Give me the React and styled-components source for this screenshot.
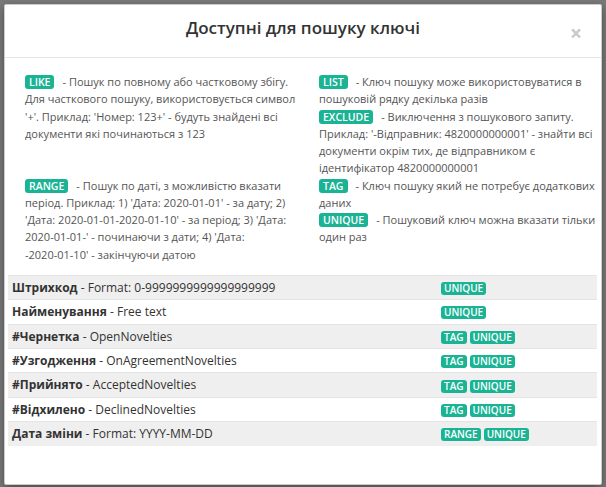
import React from "react";
import styled, { createGlobalStyle } from "styled-components";

/* ================= global ================= */
const GlobalStyle = createGlobalStyle`
  html, body {
    margin: 0;
    padding: 0;
    background: #7a7a7a;
  }
  body {
    font-family: "Open Sans", "Noto Sans", sans-serif;
    color: #333333;
  }
`;

/* ================= styled-components ================= */
const Backdrop = styled.div`
  width: 606px;
  height: 487px;
  box-sizing: border-box;
  padding: 4px 4px 2px 4px;
  background: #7a7a7a;
  overflow: hidden;
`;

const Modal = styled.div`
  height: 481px;
  box-sizing: border-box;
  background: #ffffff;
  border: 1px solid rgba(0, 0, 0, 0.2);
  border-radius: 2px;
  box-shadow: 0 3px 9px rgba(0, 0, 0, 0.4);
  display: flex;
  flex-direction: column;
`;

const Header = styled.div`
  position: relative;
  padding: 11px 15px 17px;
  border-bottom: 1px solid #e5e5e5;
  text-align: center;
`;

const Title = styled.h4`
  margin: 0;
  font-size: 17px;
  line-height: 24px;
  font-weight: 600;
  color: #333333;
`;

const Close = styled.button`
  position: absolute;
  right: 19px;
  top: 18px;
  border: 0;
  background: none;
  padding: 0;
  font-family: "Open Sans", sans-serif;
  font-size: 21px;
  line-height: 21px;
  font-weight: 700;
  color: #c9c9c9;
  cursor: pointer;
`;

const Body = styled.div`
  padding: 15px 4px 0 3px;
`;

const Legend = styled.div`
  display: grid;
  grid-template-columns: 275px 290px;
  column-gap: 19px;
  padding-left: 17px;
  margin-bottom: 12px;
  font-size: 11px;
  line-height: 17.25px;
  color: #555555;
`;

const LegendCol = styled.div``;

const LegendItem = styled.div`
  .dash {
    margin-left: 8px;
  }
  .nw {
    white-space: nowrap;
  }
`;

const Badge = styled.span`
  display: inline-block;
  background: #1ab394;
  color: #ffffff;
  font-weight: 600;
  border-radius: 3px;
  font-size: ${(p) => (p.$small ? "10px" : "10.5px")};
  line-height: ${(p) => (p.$small ? "13px" : "14px")};
  padding: ${(p) => (p.$small ? "0 3px" : "0 4px")};
  margin-right: ${(p) => (p.$small ? "3px" : "0")};
  vertical-align: ${(p) => (p.$small ? "middle" : "baseline")};
`;

const Table = styled.table`
  width: 100%;
  border-collapse: collapse;
  font-size: 12px;
  line-height: 17.4px;
  color: #333333;

  tr:nth-child(odd) td {
    background: #efefef;
  }

  td {
    padding: 3px 4px;
    border-top: 1px solid #e4e4e4;
    vertical-align: middle;
  }

  td:first-child {
    width: 421px;
  }

  b {
    font-weight: 700;
  }
`;

/* ================= data ================= */
const legendLeft = [
  [
    {
      tag: "LIKE",
      text:
        "- Пошук по повному або частковому збігу. Для часткового пошуку, використовується символ '+'. Приклад: 'Номер: 123+' - будуть знайдені всі документи які починаються з 123",
    },
  ],
  [
    {
      tag: "RANGE",
      text:
        "- Пошук по даті, з можливістю вказати період. Приклад: 1) 'Дата: 2020-01-01' - за дату; 2) 'Дата: 2020-01-01-2020-01-10' - за період; 3) 'Дата: 2020-01-01-' - починаючи з дати; 4) 'Дата:",
      tail: "-2020-01-10'",
      after: " - закінчуючи датою",
    },
  ],
];

const legendRight = [
  [
    {
      tag: "LIST",
      text: "- Ключ пошуку може використовуватися в пошуковій рядку декілька разів",
    },
    {
      tag: "EXCLUDE",
      text:
        "- Виключення з пошукового запиту. Приклад: '-Відправник: 4820000000001' - знайти всі документи окрім тих, де відправником є ідентифікатор 4820000000001",
    },
  ],
  [
    {
      tag: "TAG",
      text: "- Ключ пошуку який не потребує додаткових даних",
    },
    {
      tag: "UNIQUE",
      text: "- Пошуковий ключ можна вказати тільки один раз",
    },
  ],
];

const keys = [
  { name: "Штрихкод", desc: "Format: 0-9999999999999999999", tags: ["UNIQUE"] },
  { name: "Найменування", desc: "Free text", tags: ["UNIQUE"] },
  { name: "#Чернетка", desc: "OpenNovelties", tags: ["TAG", "UNIQUE"] },
  { name: "#Узгодження", desc: "OnAgreementNovelties", tags: ["TAG", "UNIQUE"] },
  { name: "#Прийнято", desc: "AcceptedNovelties", tags: ["TAG", "UNIQUE"] },
  { name: "#Відхилено", desc: "DeclinedNovelties", tags: ["TAG", "UNIQUE"] },
  { name: "Дата зміни", desc: "Format: YYYY-MM-DD", tags: ["RANGE", "UNIQUE"] },
];

/* ================= components ================= */
const LegendBlock = ({ items }) => (
  <LegendCol>
    {items.map((it) => (
      <LegendItem key={it.tag}>
        <Badge>{it.tag}</Badge>
        <span className="dash">
          {it.text}
          {it.tail && (
            <>
              {" "}
              <span className="nw">{it.tail}</span>
              {it.after}
            </>
          )}
        </span>
      </LegendItem>
    ))}
  </LegendCol>
);

const App = () => {
  return (
    <>
      <GlobalStyle />
      <Backdrop>
        <Modal>
          <Header>
            <Title>Доступні для пошуку ключі</Title>
            <Close aria-label="close">×</Close>
          </Header>

          <Body>
            <Legend>
              <LegendBlock items={legendLeft[0]} />
              <LegendBlock items={legendRight[0]} />
              <LegendBlock items={legendLeft[1]} />
              <LegendBlock items={legendRight[1]} />
            </Legend>

            <Table>
              <tbody>
                {keys.map((k) => (
                  <tr key={k.name}>
                    <td>
                      <b>{k.name}</b> - {k.desc}
                    </td>
                    <td>
                      {k.tags.map((t) => (
                        <Badge $small key={t}>
                          {t}
                        </Badge>
                      ))}
                    </td>
                  </tr>
                ))}
              </tbody>
            </Table>
          </Body>
        </Modal>
      </Backdrop>
    </>
  );
};

export default App;
